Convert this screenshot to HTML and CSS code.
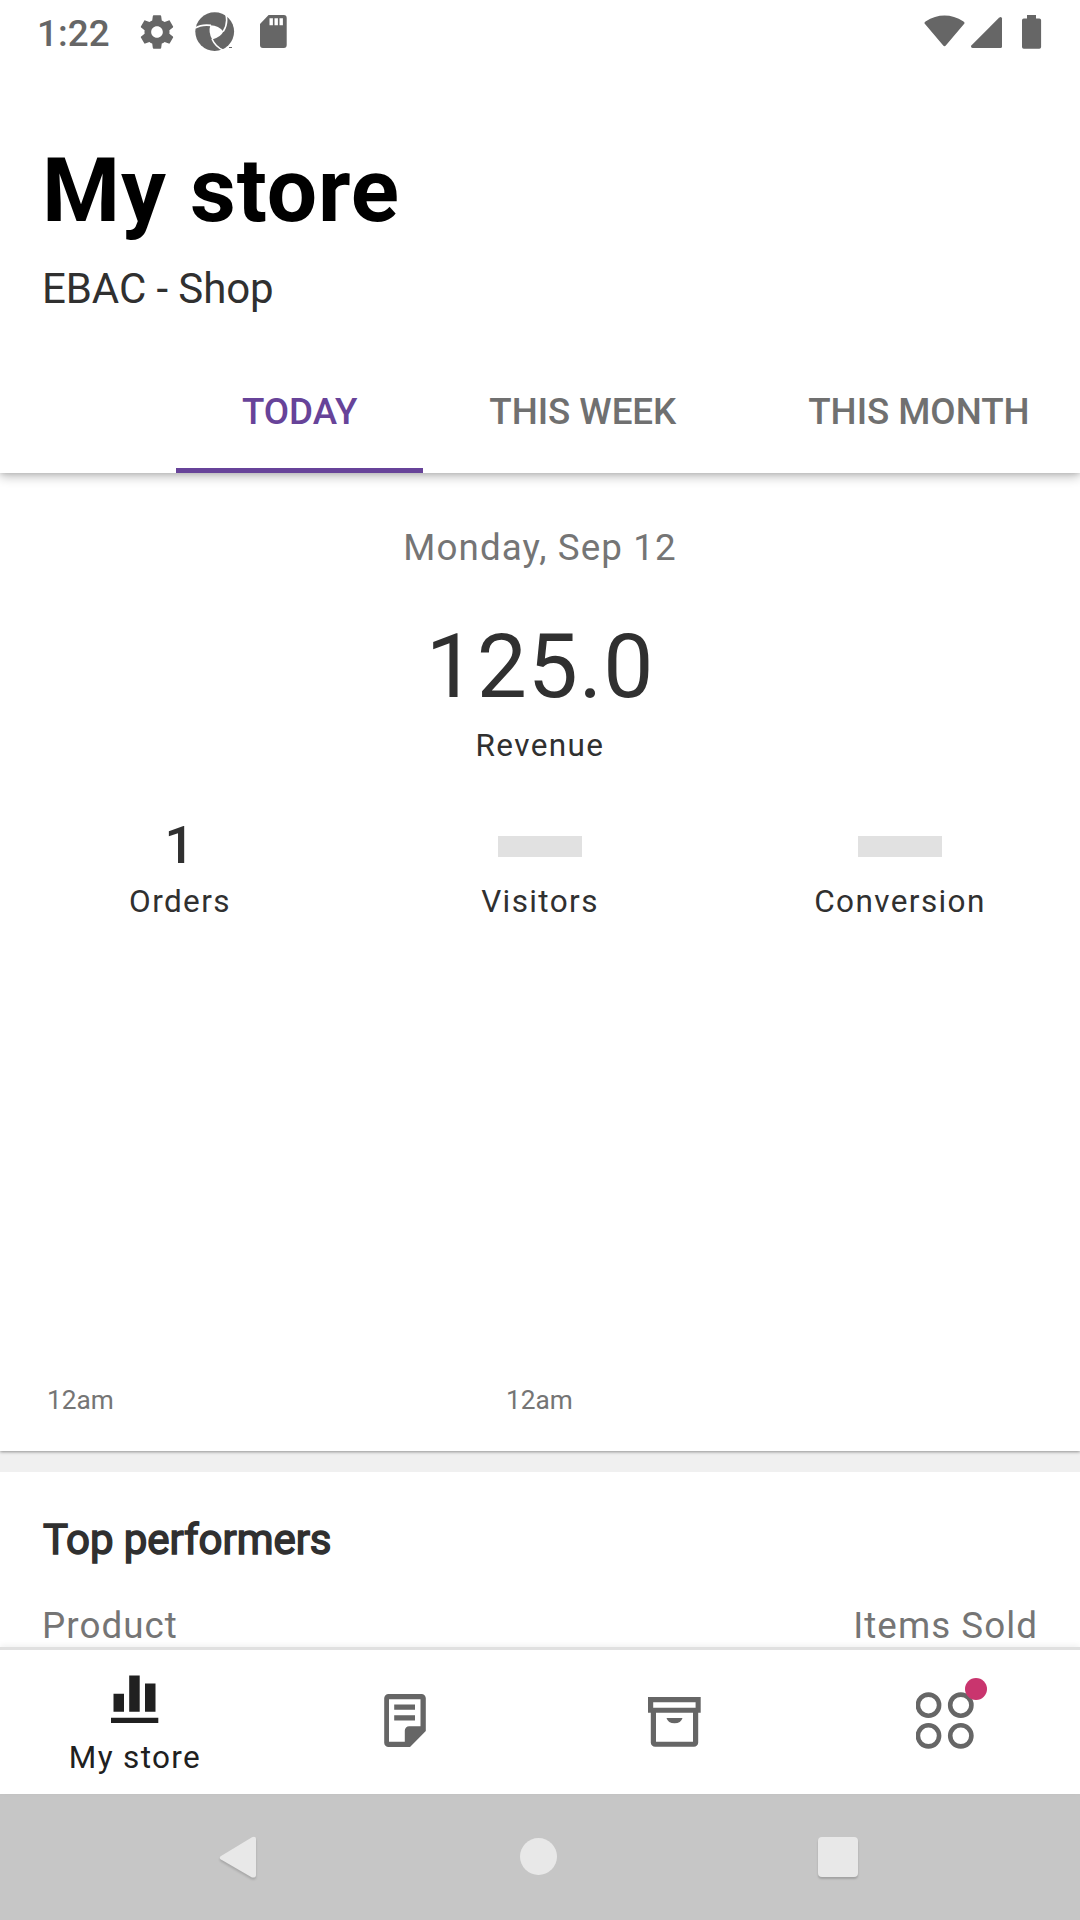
FILE: index.html
```html
<!DOCTYPE html>
<html lang="en">
<head>
<meta charset="utf-8">
<title>My store</title>
<link rel="stylesheet" href="styles.css">
</head>
<body>
<div class="screen">
  <header class="header">
    <div class="status">
      <span class="clock">1:22</span>
      <svg class="gear" width="40" height="40" viewBox="0 0 24 24"><path d="M19.43 12.98c.04-.32.07-.64.07-.98s-.03-.66-.07-.98l2.11-1.65c.19-.15.24-.42.12-.64l-2-3.46c-.12-.22-.39-.3-.61-.22l-2.49 1c-.52-.4-1.08-.73-1.69-.98l-.38-2.65C14.46 2.18 14.25 2 14 2h-4c-.25 0-.46.18-.49.42l-.38 2.65c-.61.25-1.17.59-1.69.98l-2.49-1c-.23-.09-.49 0-.61.22l-2 3.46c-.13.22-.07.49.12.64l2.11 1.65c-.04.32-.07.65-.07.98s.03.66.07.98l-2.11 1.65c-.19.15-.24.42-.12.64l2 3.46c.12.22.39.3.61.22l2.49-1c.52.4 1.08.73 1.69.98l.38 2.65c.03.24.24.42.49.42h4c.25 0 .46-.18.49-.42l.38-2.65c.61-.25 1.17-.59 1.69-.98l2.49 1c.23.09.49 0 .61-.22l2-3.46c.12-.22.07-.49-.12-.64l-2.11-1.65zM12 15.5c-1.93 0-3.5-1.57-3.5-3.5s1.57-3.5 3.5-3.5 3.5 1.57 3.5 3.5-1.57 3.5-3.5 3.5z"/></svg>
      <svg class="aperture" width="40" height="40" viewBox="0 0 40 40">
        <circle cx="19.7" cy="19.6" r="19.4"/>
        <path class="cut" d="M15.4 13.2Q24 13.6 28.4 19.4Q26.2 24.6 17.2 27.4Q13 20 15.4 13.2Z"/>
        <path class="slit" d="M0 16.2Q6 12.2 16 13.4M30.6 1.5Q33.6 11 28.2 19.6M17 27Q20.5 35 28.5 38.3"/>
        <path d="M34 35h3v1h-3z"/>
      </svg>
      <svg class="sdcard" width="27" height="33" viewBox="0 0 27 33"><path fill-rule="evenodd" d="M8.6 0H23.800a2.900 2.900 0 0 1 2.900 2.900V30.100a2.900 2.900 0 0 1-2.900 2.900H2.900a2.900 2.900 0 0 1-2.900-2.900V9zM9.500 3.300v7h3.400v-7zM14.500 3.300v7h3.400v-7zM19.500 3.300v7h3.400v-7z"/></svg>
      <svg class="signals" width="118" height="34" viewBox="0 0 118 34">
        <path d="M1 9Q-.3 7.600 1.500 6.500Q20.500-5.300 39.500 6.500Q41.300 7.600 40 9L22 30.300Q20.500 32.300 19 30.300z"/>
        <path d="M47.600 30.300L75 2.700Q77.600.8 78 3.500V31.500Q78 33 76.500 33H48.500Q46 32.500 47.600 30.300z"/>
        <path d="M103 0h9v3.500h3.300a1.800 1.800 0 0 1 1.800 1.800V32a1.800 1.800 0 0 1-1.800 1.800H99.800A1.800 1.800 0 0 1 98 32V5.300a1.800 1.800 0 0 1 1.800-1.800H103z"/>
      </svg>
    </div>
    <h1 class="title">My store</h1>
    <p class="subtitle">EBAC - Shop</p>
    <nav class="tabs">
      <span class="tab active">TODAY</span>
      <span class="tab">THIS WEEK</span>
      <span class="tab">THIS MONTH</span>
    </nav>
  </header>

  <main class="content">
    <section class="stats">
      <div class="date">Monday, Sep 12</div>
      <div class="revenue">125.0</div>
      <div class="label">Revenue</div>
      <div class="metrics">
        <div class="metric"><div class="value"><span class="number">1</span></div><div class="label">Orders</div></div>
        <div class="metric"><div class="value"><span class="skeleton"></span></div><div class="label">Visitors</div></div>
        <div class="metric"><div class="value"><span class="skeleton"></span></div><div class="label">Conversion</div></div>
      </div>
      <div class="axis"><span>12am</span><span>12am</span></div>
    </section>
    <section class="performers">
      <h2 class="section-title">Top performers</h2>
      <div class="columns"><span>Product</span><span>Items Sold</span></div>
    </section>
  </main>

  <nav class="bottom-nav">
    <div class="nav-item selected">
      <svg width="48" height="48" viewBox="0 0 48 48"><path d="M2.500 18.800h10.500v18H2.500zM18.200.6h10.500v36.200H18.200zM34 8.600h10.500v28.200H34zM0 42.700h47.300v5.200H0z"/></svg>
      <span class="nav-label">My store</span>
    </div>
    <div class="nav-item">
      <svg class="order-icon" width="42" height="53" viewBox="0 0 42 53"><path fill-rule="evenodd" d="M4.500 0H37.500a4.300 4.300 0 0 1 4.300 4.300V37L26 53H4.500A4.300 4.300 0 0 1 .200 48.700V4.300A4.300 4.300 0 0 1 4.500 0zM5 5.200V47.700H20.800V36.500a4.300 4.300 0 0 1 4.300-4.300H36.500V5.200z"/><path d="M10.200 10.500h20.800v5.200H10.200zM10.200 21.300h20.800v5.200H10.200z"/></svg>
    </div>
    <div class="nav-item">
      <svg class="box-icon" width="53" height="50" viewBox="0 0 53 50"><path fill-rule="evenodd" d="M0 0H52.700V15.700H50.200V45.500A4.300 4.300 0 0 1 45.900 49.800H7.100A4.300 4.300 0 0 1 2.800 45.500V15.700H0zM5.200 5.300V10.700H47.600V5.300zM8 15.700V44.700H45V15.700z"/><path d="M18.500 21h16Q33 26.300 26.500 26.300T18.500 21z"/></svg>
    </div>
    <div class="nav-item">
      <div class="menu-icon">
        <svg width="58" height="58" viewBox="0 0 58 58"><g class="rings"><circle cx="12.500" cy="13.200" r="10.600"/><circle cx="44.800" cy="13.200" r="10.600"/><circle cx="12.500" cy="43.800" r="10.600"/><circle cx="44.800" cy="43.800" r="10.600"/></g></svg>
        <span class="badge"></span>
      </div>
    </div>
  </nav>

  <footer class="system-nav">
    <svg class="back" width="38" height="46" viewBox="0 0 38 46"><path d="M2 20L33 1.200Q37 0 37 3V39Q37 42 33 41.500L2 23.500Q-.500 21.700 2 20z"/></svg>
    <span class="home"></span>
    <span class="recents"></span>
  </footer>
</div>
</body>
</html>
```
FILE: styles.css
```css
* { box-sizing: border-box; margin: 0; padding: 0; }
body { width: 1080px; height: 1920px; overflow: hidden; background: #fff; font-family: Roboto, sans-serif; color: #303030; }
svg { display: block; flex: none; }
.screen { display: flex; flex-direction: column; height: 1920px; }

.header { position: relative; z-index: 1; height: 473px; flex: none; background: #fff; box-shadow: 0 4px 10px rgba(0,0,0,.24), 0 0 5px rgba(0,0,0,.16); display: flex; flex-direction: column; }
.status { height: 63px; display: flex; align-items: center; padding: 0 38px 0 37px; fill: #666; color: #666; }
.clock { font-size: 36.75px; font-weight: 500; line-height: 44px; padding-top: 4px; width: 100px; letter-spacing: .1px; white-space: nowrap; }
.aperture { margin-left: 18px; }
.aperture .cut { fill: #fff; }
.aperture .slit { fill: none; stroke: #fff; stroke-width: 1.6; }
.sdcard { margin-left: 25px; }
.signals { margin-left: auto; }
.title { margin: 75px 0 0 42px; font-size: 89.25px; line-height: 105px; font-weight: 700; letter-spacing: .9px; color: #000; }
.subtitle { margin: 21px 0 0 42px; font-size: 42px; line-height: 50px; letter-spacing: -.1px; }
.tabs { display: flex; margin: auto 0 0 176px; height: 123px; white-space: nowrap; }
.tab { padding: 0 66px; font-size: 36.75px; font-weight: 500; line-height: 123px; letter-spacing: -.05px; color: #707070; flex: none; }
.tab.active { color: #674399; box-shadow: inset 0 -5px #674399; }

.content { flex: 1; display: flex; flex-direction: column; background: #f0f0f0; min-height: 0; }
.stats { height: 978px; flex: none; padding-top: 53px; background: #fff; text-align: center; display: flex; flex-direction: column; box-shadow: 0 1px 3px rgba(0,0,0,.4); }
.date { font-size: 36.75px; line-height: 44px; letter-spacing: 1.1px; color: #757575; }
.revenue { margin-top: 44px; font-size: 89.25px; line-height: 105px; letter-spacing: .9px; }
.label { font-size: 31.5px; line-height: 38px; letter-spacing: 1.4px; }
.revenue + .label { margin-top: 8px; }
.metrics { display: grid; grid-template-columns: repeat(3, 1fr); margin-top: 49px; }
.value { height: 65px; margin-bottom: 4px; display: flex; align-items: center; justify-content: center; }
.number { font-size: 52.5px; font-weight: 500; line-height: 60px; padding: 0 1px 4px 0; }
.skeleton { width: 84px; height: 21px; background: #e1e1e1; }
.axis { margin-top: auto; margin-bottom: 35px; padding-left: 47px; display: grid; grid-template-columns: 459px 1fr; text-align: left; font-size: 26.25px; line-height: 31px; color: #757575; }
.performers { margin-top: 21px; padding: 43px 42px 0; background: #fff; flex: 1; min-height: 0; }
.section-title { padding-left: 1px; font-size: 42px; font-weight: 400; line-height: 50px; letter-spacing: -.05px; -webkit-text-stroke: 1.5px #303030; }
.columns { display: flex; justify-content: space-between; margin-top: 39px; font-size: 36.75px; line-height: 44px; letter-spacing: 1.05px; color: #757575; }

.bottom-nav { position: relative; height: 147px; flex: none; display: grid; grid-template-columns: repeat(4, 270px); background: #fff; border-top: 3px solid #e0e0e0; box-shadow: 0 -2px 6px rgba(0,0,0,.06); fill: #666; }
.nav-item { display: flex; flex-direction: column; align-items: center; }
.selected { padding-top: 25px; fill: #202020; color: #202020; }
.nav-label { margin-top: 16px; font-size: 31.5px; line-height: 38px; letter-spacing: 1.35px; }
.order-icon { margin-top: 44px; }
.box-icon { margin: 47px 1px 0 0; }
.menu-icon { position: relative; margin-top: 42px; }
.rings { fill: none; stroke: #666; stroke-width: 4.6; }
.badge { position: absolute; left: 49px; top: -14px; width: 22px; height: 22px; border-radius: 50%; background: #c9356e; }

.system-nav { height: 126px; flex: none; background: #c6c6c6; display: flex; padding: 42px 222px 0 219px; justify-content: space-between; }
.back { fill: #e8e8e8; filter: drop-shadow(0 2px 1px rgba(0,0,0,.16)); }
.home { width: 37px; height: 37px; margin: 2px 0 0 2px; border-radius: 50%; background: #e8e8e8; }
.recents { width: 40px; height: 40px; margin-top: 1px; border-radius: 4px; background: #e8e8e8; box-shadow: 0 2px 2px rgba(0,0,0,.18); }
```
